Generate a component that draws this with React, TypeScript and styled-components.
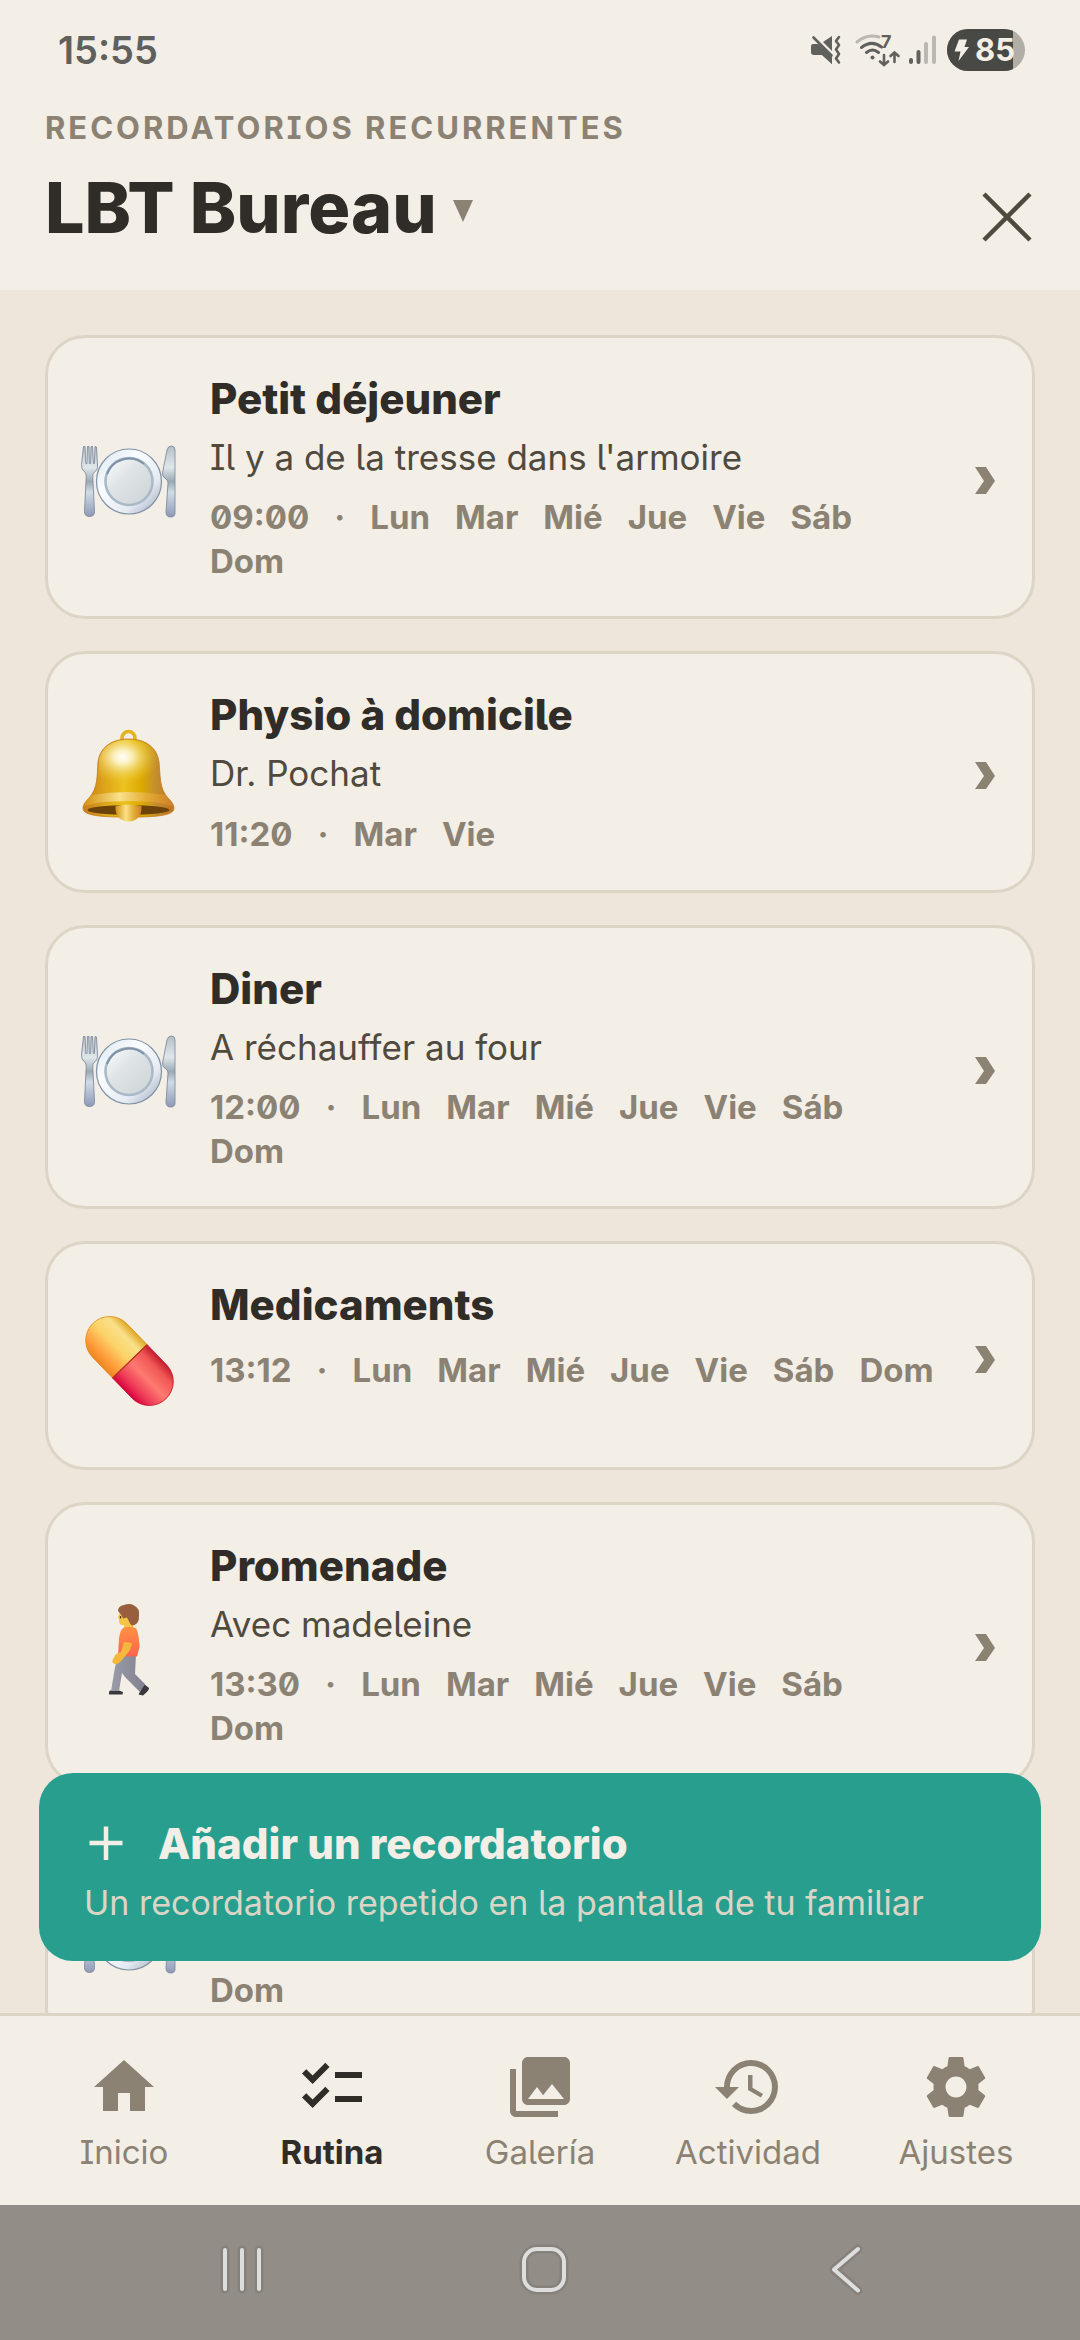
/* react関連 */
import React, { FC, useState } from 'react';
/* styled-components */
import styled, { createGlobalStyle } from 'styled-components';
/* react-icons */
import { MdHome, MdChecklist, MdPhotoLibrary, MdHistory } from 'react-icons/md';


// === ▽ types & data ▽ ========================================================== //
type EmojiName = 'meal' | 'bell' | 'pill' | 'walk';
interface Reminder {
  id: number;
  emoji: EmojiName;
  title: string;
  detail?: string;
  time: string;
  days: string[];
}

const EVERY_DAY = ['Lun', 'Mar', 'Mié', 'Jue', 'Vie', 'Sáb', 'Dom'];

const reminders: Reminder[] = [
  { id: 1, emoji: 'meal', title: 'Petit déjeuner',    detail: "Il y a de la tresse dans l'armoire", time: '09:00', days: EVERY_DAY },
  { id: 2, emoji: 'bell', title: 'Physio à domicile', detail: 'Dr. Pochat',                         time: '11:20', days: ['Mar', 'Vie'] },
  { id: 3, emoji: 'meal', title: 'Diner',             detail: 'A réchauffer au four',               time: '12:00', days: EVERY_DAY },
  { id: 4, emoji: 'pill', title: 'Medicaments',                                                     time: '13:12', days: EVERY_DAY },
  { id: 5, emoji: 'walk', title: 'Promenade',         detail: 'Avec madeleine',                     time: '13:30', days: EVERY_DAY },
  { id: 6, emoji: 'meal', title: 'Souper',                                                          time: '18:00', days: EVERY_DAY },
];
// ========================================================== △ types & data △ === //


// === ▽ icons ▽ ================================================================= //
const SettingsIcon: FC = () => (
  <svg viewBox="0 0 24 24" fill="currentColor" aria-hidden="true">
    <path d="M19.43 12.98c.04-.32.07-.64.07-.98s-.03-.66-.07-.98l2.11-1.65c.19-.15.24-.42.12-.64l-2-3.46c-.12-.22-.39-.3-.61-.22l-2.49 1c-.52-.4-1.08-.73-1.69-.98l-.38-2.65C14.46 2.18 14.25 2 14 2h-4c-.25 0-.46.18-.49.42l-.38 2.65c-.61.25-1.17.59-1.69.98l-2.49-1c-.23-.09-.49 0-.61.22l-2 3.46c-.13.22-.07.49.12.64l2.11 1.65c-.04.32-.07.65-.07.98s.03.66.07.98l-2.11 1.65c-.19.15-.24.42-.12.64l2 3.46c.12.22.39.3.61.22l2.49-1c.52.4 1.08.73 1.69.98l.38 2.65c.03.24.24.42.49.42h4c.25 0 .46-.18.49-.42l.38-2.65c.61-.25 1.17-.59 1.69-.98l2.49 1c.23.09.49 0 .61-.22l2-3.46c.12-.22.07-.49-.12-.64l-2.11-1.65zM12 15.5c-1.93 0-3.5-1.57-3.5-3.5s1.57-3.5 3.5-3.5 3.5 1.57 3.5 3.5-1.57 3.5-3.5 3.5z" />
  </svg>
);

const StatusIcons: FC = () => (
  <svg width="230" height="44" viewBox="811 28 230 44" aria-hidden="true">
    {/* silencio + vibración */}
    <g fill="#60605d">
      <path d="M813 44h5l14 13v7l-10-9h-8q-3 0-3-3v-5q0-3 2-3z" />
      <path d="M823 42l9-6v15z" />
      <path d="M818 44l14 13v7l-11-10z" />
      <path d="M813.500 37.500l18 18" stroke="#60605d" strokeWidth="2.600" strokeLinecap="round" />
    </g>
    <path d="M839 37l-3 4 3 4-3 4.500 3 4.500-3 4.500 3 4" fill="none" stroke="#60605d" strokeWidth="2.600" strokeLinecap="round" strokeLinejoin="round" />
    {/* wifi */}
    <g fill="none" strokeWidth="3" strokeLinecap="round">
      <path d="M857 42q10-8.500 22-5" stroke="#bbb8b2" />
      <path d="M861.500 47.500q10-8 20-.500" stroke="#60605d" />
      <path d="M866.500 52.500q6-5 12 0" stroke="#60605d" />
      <path d="M884 55v9M880 61.500l4 3.500 4-3.500M894.500 62v-9M890.500 56l4-3.500 4 3.500" stroke="#60605d" strokeWidth="2.600" />
    </g>
    <circle cx="872.500" cy="57.500" r="2" fill="#60605d" />
    <text x="881" y="47.500" fontSize="18" fontWeight="700" fill="#60605d">7</text>
    {/* cobertura */}
    <g strokeWidth="4" strokeLinecap="round">
      <path d="M911 60v2M918.500 52v10" stroke="#60605d" />
      <path d="M926 44v18M934 37.500v24.500" stroke="#bbb8b2" />
    </g>
    {/* batería */}
    <defs>
      <clipPath id="battery"><rect x="947" y="29" width="78" height="42" rx="21" /></clipPath>
    </defs>
    <g clipPath="url(#battery)">
      <rect x="947" y="29" width="78" height="42" fill="#b1aea7" />
      <rect x="947" y="29" width="66" height="42" fill="#484844" />
    </g>
    <path d="M959 39.500h8l-2.500 7.500h4.500l-10.500 14 2-9.500h-6z" fill="#f3eee6" />
    <text x="975" y="61" fontSize="31" fontWeight="700" fill="#f3eee6">85</text>
  </svg>
);

const MealEmoji: FC = () => (
  <>
    <defs>
      <linearGradient id="steel" x1="0" y1="0" x2="0" y2="1">
        <stop offset="0" stopColor="#b3bfc6" /><stop offset=".3" stopColor="#dfe7ea" />
        <stop offset=".5" stopColor="#9aa9b3" /><stop offset=".65" stopColor="#d0dce5" /><stop offset="1" stopColor="#8f99b8" />
      </linearGradient>
      <linearGradient id="rim" x1="0" y1="0" x2="1" y2="1">
        <stop offset="0" stopColor="#d6e4ee" /><stop offset=".35" stopColor="#fafdff" />
        <stop offset=".7" stopColor="#e6ebf3" /><stop offset="1" stopColor="#9aa5b8" />
      </linearGradient>
      <linearGradient id="dish" x1="0" y1="0" x2="1" y2="1">
        <stop offset="0" stopColor="#fdfefe" /><stop offset=".4" stopColor="#dfe4e7" /><stop offset="1" stopColor="#cdd4d5" />
      </linearGradient>
    </defs>
    {/* tenedor */}
    <path d="M2.500 21.500h1.500l.8 17h1.200l.4-17h1.600l.4 17h1.200l.4-17h1.600l.8 17h1l.6-17 1.500.5 1 18q.5 5-3.500 7.500-1.500 1-1.200 5l1.700 34q0 5-5 5t-5-5l1.700-34q.2-4-1.200-5-4-3-3.500-8z" fill="url(#steel)" stroke="#75839a" strokeWidth=".8" />
    {/* cuchillo */}
    <path d="M94 88V25q0-4-3.500-4-3.500 0-4.500 4l-4.500 23q-.5 4 3.500 6 2 1.500 2 4l-2 29q0 5 4.500 5 4.500 0 4.500-4z" fill="url(#steel)" stroke="#75839a" strokeWidth=".8" />
    <circle cx="48" cy="56.500" r="32.500" fill="url(#rim)" stroke="#8292a3" strokeWidth="1.200" />
    <circle cx="48" cy="56.500" r="23.500" fill="url(#dish)" stroke="#a9b9c7" strokeWidth="2.600" />
    <path d="M26 49a23.500 23.500 0 0 1 37-10" fill="none" stroke="#7f92a8" strokeWidth="2" />
  </>
);

const BellEmoji: FC = () => (
  <>
    <defs>
      <linearGradient id="gold" x1="0" y1="0" x2="1" y2="0">
        <stop offset="0" stopColor="#c67a1c" /><stop offset=".22" stopColor="#dca21a" /><stop offset=".45" stopColor="#ecc21f" />
        <stop offset=".65" stopColor="#dba800" /><stop offset=".8" stopColor="#c48f2e" /><stop offset="1" stopColor="#c0701f" />
      </linearGradient>
      <radialGradient id="shine" cx=".42" cy=".3" r=".5">
        <stop offset="0" stopColor="#ffffff" /><stop offset=".25" stopColor="#fdf6cf" stopOpacity=".9" /><stop offset="1" stopColor="#ecc21f" stopOpacity="0" />
      </radialGradient>
      <linearGradient id="lip" x1="0" y1="0" x2="1" y2="0">
        <stop offset="0" stopColor="#d39311" /><stop offset=".4" stopColor="#fae18a" /><stop offset=".7" stopColor="#e3ad34" /><stop offset="1" stopColor="#d17e28" />
      </linearGradient>
    </defs>
    <circle cx="47.500" cy="18" r="6.500" fill="none" stroke="#e5b41c" strokeWidth="3.600" />
    <path d="M47.500 19C64 19 76 27 78 42c1.500 14 0 26 9 36 6 6 7 10 5 13-5 6-28 6-44.500 6S8 97 3 91c-2-3-1-7 5-13 9-10 8-22 9-36 2-15 14-23 30.500-23z" fill="url(#gold)" stroke="#c07a14" strokeWidth=".8" />
    <path d="M47.500 20C64 20 76 28 77 42c1.500 14 0 24 7 34H11c7-10 6-20 7-34 1-14 13-22 29.500-22z" fill="url(#shine)" />
    <path d="M11 75q36-6 73 0 8 7 8 12-10-6-44.500-6T3 87q0-5 8-12z" fill="url(#lip)" />
    <ellipse cx="47.500" cy="90" rx="41" ry="5" fill="#6b430a" />
    <path d="M34.500 86q13-3 26 0 .500 15-13 15.500-13.500-.500-13-15.500z" fill="url(#lip)" />
  </>
);

const PillEmoji: FC = () => (
  <>
    <defs>
      <linearGradient id="yellow" x1="0" y1="0" x2="0" y2="1">
        <stop offset="0" stopColor="#e0a722" /><stop offset=".2" stopColor="#f9e08a" /><stop offset=".5" stopColor="#fbd368" />
        <stop offset=".8" stopColor="#ff9f3d" /><stop offset="1" stopColor="#ee8420" />
      </linearGradient>
      <linearGradient id="red" x1="0" y1="0" x2="0" y2="1">
        <stop offset="0" stopColor="#c31b2f" /><stop offset=".2" stopColor="#f15755" /><stop offset=".5" stopColor="#fd7a70" />
        <stop offset=".8" stopColor="#ee3b57" /><stop offset="1" stopColor="#d8003d" />
      </linearGradient>
    </defs>
    <g transform="rotate(46 48.500 57)">
      <path d="M49 33H20a24 24 0 0 0 0 48h29z" fill="url(#yellow)" stroke="#dd9117" strokeWidth=".8" />
      <path d="M49 33h28a24 24 0 0 1 0 48H49z" fill="url(#red)" stroke="#c7132f" strokeWidth=".8" />
      <path d="M49 33v48" stroke="#b5331c" strokeWidth="1.200" />
    </g>
  </>
);

const WalkEmoji: FC = () => (
  <>
    <defs>
      <linearGradient id="shirt" x1="0" y1="0" x2="0" y2="1">
        <stop offset="0" stopColor="#ff9340" /><stop offset="1" stopColor="#fb6450" />
      </linearGradient>
      <linearGradient id="trousers" x1="0" y1="0" x2="1" y2="0">
        <stop offset="0" stopColor="#9a9ca8" /><stop offset="1" stopColor="#80838f" />
      </linearGradient>
    </defs>
    <path d="M57 47q4 9-1 13l-3-2z" fill="#f0b400" />
    <path d="M29 98.500h9l4 1.500-.500 2.500H28q-.500-3 1-4zM63 92l5 4q.500 2-6 7.500l-4.500-1z" fill="#38383d" />
    <path d="M38 62h17l-1 20 10 10-5 8-15-15-3-4-3 18h-8l4-24z" fill="url(#trousers)" />
    <path d="M39 20q-1 3-2 5l1 3q0 5 3 5h2v3h9l2-10-4-8z" fill="#f6c545" />
    <path d="M37 19q0-5 6-6 6-2 10 .500 6 3 5 10 .5 9-7 10-2-1-3-4l-2-4-4 1-2-4z" fill="#985f3f" />
    <path d="M39.500 24v2.500" stroke="#5b3a22" strokeWidth="1.200" />
    <path d="M42 36q6-2.500 13 0 4 8 3 21l-2 7.500H37l1-18q1-8 4-10.500z" fill="url(#shirt)" />
    <path d="M43 50l8 1q-1 7-6 12l-5 6q-3 4-6 3-4-1-2-5l3-5 5-2z" fill="#f3b93c" />
  </>
);

const emojis: Record<EmojiName, FC> = { meal: MealEmoji, bell: BellEmoji, pill: PillEmoji, walk: WalkEmoji };
// ================================================================= △ icons △ === //


// === ▽ Reminder Card ▽ ========================================================= //
const ReminderCard: FC<{ reminder: Reminder }> = ({ reminder }) => {
  const Emoji = emojis[reminder.emoji];
  return (
    <li>
      <StyledCard type="button">
        <StyledEmoji viewBox="0 0 96 104" aria-hidden="true"><Emoji /></StyledEmoji>
        <StyledCardBody>
          <StyledCardTitle>{ reminder.title }</StyledCardTitle>
          { reminder.detail && <StyledCardDetail>{ reminder.detail }</StyledCardDetail> }
          <StyledSchedule>
            <span>{ reminder.time }</span>
            <span>·</span>
            { reminder.days.map(day => <span key={day}>{ day }</span>) }
          </StyledSchedule>
        </StyledCardBody>
        <StyledChevron viewBox="0 0 28 36" aria-hidden="true">
          <path d="M4 8h11l9 14-9 13H4l9-13z" fill="currentColor" />
        </StyledChevron>
      </StyledCard>
    </li>
  );
};
// ========================================================= △ Reminder Card △ === //


// === ▽ App ▽ =================================================================== //
const tabs = [
  { id: 'inicio',    label: 'Inicio',    icon: <MdHome /> },
  { id: 'rutina',    label: 'Rutina',    icon: <MdChecklist /> },
  { id: 'galeria',   label: 'Galería',   icon: <MdPhotoLibrary /> },
  { id: 'actividad', label: 'Actividad', icon: <MdHistory /> },
  { id: 'ajustes',   label: 'Ajustes',   icon: <SettingsIcon /> },
];

const App: FC = () => {
  const [activeTab, setActiveTab] = useState('rutina');

  return (
    <StyledScreen>
      <GlobalStyle />
      <StyledStatusBar>
        <StyledClock>15:55</StyledClock>
        <StatusIcons />
      </StyledStatusBar>

      <StyledHeader>
        <div>
          <StyledEyebrow>RECORDATORIOS RECURRENTES</StyledEyebrow>
          <StyledHeading>
            <StyledHeadingButton type="button">
              LBT Bureau
              <svg width="20" height="28" viewBox="0 0 20 28" aria-hidden="true">
                <path d="M0 6h20L10 28z" fill="#8b8274" />
              </svg>
            </StyledHeadingButton>
          </StyledHeading>
        </div>
        <StyledClose type="button" aria-label="Cerrar">
          <svg width="50" height="50" viewBox="0 0 50 50" aria-hidden="true">
            <path d="M2 2l46 46M48 2L2 48" stroke="currentColor" strokeWidth="4.500" />
          </svg>
        </StyledClose>
      </StyledHeader>

      <StyledMain>
        <StyledList>
          { reminders.map(reminder => <ReminderCard key={reminder.id} reminder={reminder} />) }
        </StyledList>
        <StyledAddBtn type="button">
          <StyledAddTitle>
            <svg width="44" height="44" viewBox="0 0 44 44" aria-hidden="true">
              <path d="M5.500 21h33M22 4.500v33.500" stroke="currentColor" strokeWidth="4.500" />
            </svg>
            Añadir un recordatorio
          </StyledAddTitle>
          <StyledAddNote>Un recordatorio repetido en la pantalla de tu familiar</StyledAddNote>
        </StyledAddBtn>
      </StyledMain>

      <StyledTabBar>
        { tabs.map(tab => (
          <StyledTab
            key={ tab.id }
            type="button"
            $active={ tab.id === activeTab }
            onClick={ () => setActiveTab(tab.id) }
          >
            { tab.icon }
            { tab.label }
          </StyledTab>
        )) }
      </StyledTabBar>

      <StyledSystemBar>
        <button type="button" aria-label="Recientes">
          <StyledSystemIcon viewBox="0 0 60 60">
            <path d="M13 10v39M30 10v39M47 10v39" />
            <path d="M13 10v39M30 10v39M47 10v39" />
          </StyledSystemIcon>
        </button>
        <button type="button" aria-label="Pantalla de inicio">
          <StyledSystemIcon viewBox="0 0 60 60">
            <rect x="10" y="9" width="40" height="41" rx="13" />
            <rect x="10" y="9" width="40" height="41" rx="13" />
          </StyledSystemIcon>
        </button>
        <button type="button" aria-label="Atrás">
          <StyledSystemIcon viewBox="0 0 60 60">
            <path d="M42 9L18 29.500 42 50.500" />
            <path d="M42 9L18 29.500 42 50.500" />
          </StyledSystemIcon>
        </button>
      </StyledSystemBar>
    </StyledScreen>
  );
};
// =================================================================== △ App △ === //


// === ▽ style ▽ ================================================================= //
const GlobalStyle = createGlobalStyle`
  * { box-sizing: border-box; }
  body {
    margin: 0;
    font-family: Inter, "Noto Sans", sans-serif;
    /* cero con barra, I con remates, l con cola */
    font-feature-settings: "zero" 1, "cv08" 1, "cv05" 1;
    background: #eee6da;
  }
  button {
    margin: 0;
    padding: 0;
    border: 0;
    background: none;
    color: inherit;
    font: inherit;
    font-feature-settings: inherit;
    text-align: left;
    cursor: pointer;
  }
  svg { display: block; flex: none; }
`;

const StyledScreen = styled.div`
  display: flex;
  flex-direction: column;
  height: 100vh;
  color: #302c27;
`;
const StyledStatusBar = styled.div`
  display: flex;
  align-items: center;
  justify-content: space-between;
  height: 100px;
  padding: 0 39px 0 58px;
  background: #f3eee6;
`;
const StyledClock = styled.span`
  font-size: 38px;
  font-weight: 600;
  color: #60605d;
`;

const StyledHeader = styled.header`
  display: flex;
  align-items: flex-end;
  justify-content: space-between;
  padding: 8px 40px 40px 45px;
  background: #f3eee6;
`;
const StyledEyebrow = styled.p`
  margin: 0 0 18px;
  font-size: 31px;
  font-weight: 700;
  line-height: 40px;
  letter-spacing: 3px;
  color: #8b8274;
`;
const StyledHeading = styled.h1`
  margin: 0;
  font-size: 70px;
  font-weight: 800;
  line-height: 84px;
`;
const StyledHeadingButton = styled.button`
  display: flex;
  align-items: center;
  gap: 16px;
`;
const StyledClose = styled.button`
  padding: 8px;
  color: #504a3e;
`;

const StyledMain = styled.main`
  position: relative;
  flex: 1;
  min-height: 0;
`;
const StyledList = styled.ul`
  display: flex;
  flex-direction: column;
  gap: 32px;
  height: 100%;
  margin: 0;
  padding: 45px 45px 272px;
  list-style: none;
  overflow-y: auto;
  scrollbar-width: none;
`;
const StyledCard = styled.button`
  display: flex;
  align-items: center;
  width: 100%;
  min-height: 229px;
  padding: 33px;
  border: 3px solid #dcd5c6;
  border-radius: 40px;
  background: #f3eee6;
`;
const StyledEmoji = styled.svg`
  width: 96px;
  height: 104px;
  margin-right: 33px;
`;
const StyledCardBody = styled.div`
  flex: 1;
  align-self: flex-start;
`;
const StyledCardTitle = styled.div`
  font-size: 42px;
  font-weight: 800;
  line-height: 56px;
`;
const StyledCardDetail = styled.div`
  margin-top: 6px;
  font-size: 35px;
  line-height: 48px;
  color: #504a3e;
`;
const StyledSchedule = styled.div`
  display: flex;
  flex-wrap: wrap;
  align-items: center;
  column-gap: 25px;
  min-height: 46px;
  margin-top: 14px;
  font-size: 33px;
  font-weight: 700;
  line-height: 44px;
  color: #8b8274;
`;
const StyledChevron = styled.svg`
  width: 28px;
  height: 36px;
  margin-left: 33px;
  color: #8b8274;
`;

const StyledAddBtn = styled.button`
  position: absolute;
  right: 39px;
  bottom: 52px;
  left: 39px;
  padding: 43px 45px 36px;
  border-radius: 34px;
  background: #289f8e;
  color: #f3eee6;
`;
const StyledAddTitle = styled.div`
  display: flex;
  align-items: center;
  gap: 30px;
  font-size: 42px;
  font-weight: 800;
  line-height: 56px;
`;
const StyledAddNote = styled.div`
  margin-top: 9px;
  font-size: 34px;
  line-height: 44px;
  color: #dcd5c6;
`;

const StyledTabBar = styled.nav`
  display: grid;
  grid-template-columns: repeat(5, 1fr);
  padding: 35px 20px 33px;
  border-top: 3px solid #dcd5c6;
  background: #f3eee6;
`;
const StyledTab = styled.button<{ $active: boolean }>`
  display: flex;
  flex-direction: column;
  align-items: center;
  gap: 9px;
  font-size: 33px;
  font-weight: ${ ({ $active }) => $active ? 700 : 400 };
  line-height: 40px;
  color: ${ ({ $active }) => $active ? '#302c27' : '#8b8274' };

  svg {
    width: 72px;
    height: 72px;
  }
`;

const StyledSystemBar = styled.div`
  display: grid;
  grid-template-columns: repeat(3, 1fr);
  justify-items: center;
  align-items: center;
  height: 135px;
  padding: 0 83px 0 91px;
  background: #928e87;
`;
const StyledSystemIcon = styled.svg`
  width: 60px;
  height: 60px;
  margin-bottom: 5px;
  fill: none;
  stroke: #dedede;
  stroke-width: 4px;
  stroke-linecap: round;
  stroke-linejoin: round;

  /* contorno oscuro bajo el trazo claro */
  > :first-child {
    stroke: #86827b;
    stroke-width: 9px;
  }
`;
// ================================================================= △ style △ === //

export default App;
